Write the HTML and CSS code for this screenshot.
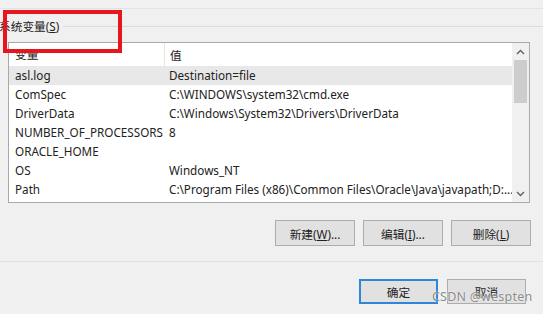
FILE: index.html
```html
<!DOCTYPE html>
<html lang="zh-CN">
<head>
	<meta charset="UTF-8">
	<title>环境变量</title>
	<link rel="stylesheet" href="styles.css">
</head>
<body>
	<div class="top-strip"></div>

	<div class="group-head">
		<span class="group-title">系统变量(<u>S</u>)</span>
		<span class="group-line"></span>
	</div>

	<div class="listbox">
		<div class="list-main">
			<div class="list-header">
				<div class="col-name">变量</div>
				<div class="col-value">值</div>
			</div>
			<div class="row selected"><div class="col-name">asl.log</div><div class="col-value">Destination=file</div></div>
			<div class="row"><div class="col-name">ComSpec</div><div class="col-value">C:\WINDOWS\system32\cmd.exe</div></div>
			<div class="row"><div class="col-name">DriverData</div><div class="col-value">C:\Windows\System32\Drivers\DriverData</div></div>
			<div class="row"><div class="col-name">NUMBER_OF_PROCESSORS</div><div class="col-value">8</div></div>
			<div class="row"><div class="col-name">ORACLE_HOME</div><div class="col-value"></div></div>
			<div class="row"><div class="col-name">OS</div><div class="col-value">Windows_NT</div></div>
			<div class="row"><div class="col-name">Path</div><div class="col-value">C:\Program Files (x86)\Common Files\Oracle\Java\javapath;D:...</div></div>
		</div>
		<div class="scrollbar">
			<div class="scroll-btn">
				<svg width="9" height="6" viewBox="0 0 9 6"><polyline points="1,5 4.5,1.5 8,5" fill="none" stroke="#606060" stroke-width="1.4"/></svg>
			</div>
			<div class="scroll-track"><div class="scroll-thumb"></div></div>
			<div class="scroll-btn">
				<svg width="9" height="6" viewBox="0 0 9 6"><polyline points="1,1 4.5,4.5 8,1" fill="none" stroke="#606060" stroke-width="1.4"/></svg>
			</div>
		</div>
	</div>

	<div class="actions">
		<button class="btn">新建(<u>W</u>)...</button>
		<button class="btn">编辑(<u>I</u>)...</button>
		<button class="btn">删除(<u>L</u>)</button>
	</div>

	<div class="separator"></div>

	<div class="footer">
		<button class="btn btn-small btn-default">确定</button>
		<button class="btn btn-small">取消</button>
	</div>

	<div class="highlight-box"></div>
	<div class="watermark">CSDN @wespten</div>
</body>
</html>
```

FILE: styles.css
```css
body{
	margin: 0;
	width: 543px;
	height: 314px;
	overflow: hidden;
	background: #f0f0f0;
	font-family: "Noto Sans", "Noto Sans CJK SC", sans-serif;
	font-size: 11.7px;
	color: #222;
	position: relative;
}
.top-strip{
	height: 8px;
	border-bottom: 1px solid #e2e2e2;
}
.group-head{
	margin-top: 9px;
	height: 16px;
	display: flex;
	align-items: center;
}
.group-title{
	margin-left: -1px;
	padding-right: 4px;
	line-height: 16px;
}
.group-line{
	flex: 1;
	height: 1px;
	background: #dcdcdc;
}
.listbox{
	margin: 8px 0 0 8px;
	width: 522px;
	height: 161px;
	box-sizing: border-box;
	border: 1px solid #a9a9a9;
	background: #fff;
	display: flex;
}
.list-main{
	flex: 1;
	overflow: hidden;
}
.list-header{
	display: flex;
	height: 23px;
	align-items: center;
}
.list-header .col-name{
	border-right: 1px solid #e5e5e5;
	height: 23px;
	line-height: 23px;
}
.row{
	display: flex;
	height: 19px;
	line-height: 19px;
	white-space: nowrap;
}
.row.selected{
	background: #e8e8e8;
}
.col-name{
	width: 149px;
	padding-left: 6px;
	flex-shrink: 0;
}
.col-value{
	padding-left: 5px;
}
.scrollbar{
	width: 17px;
	background: #f0f0f0;
	display: flex;
	flex-direction: column;
}
.scroll-btn{
	height: 17px;
	display: flex;
	align-items: center;
	justify-content: center;
}
.scroll-track{
	flex: 1;
	padding: 0 2px;
}
.scroll-thumb{
	height: 43px;
	background: #cdcdcd;
}
.actions{
	margin-top: 17px;
	display: flex;
	justify-content: flex-end;
	gap: 8px;
	padding-right: 12px;
}
.btn{
	width: 80px;
	height: 26px;
	background: #e1e1e1;
	border: 1px solid #adadad;
	font-family: inherit;
	font-size: 11.7px;
	color: #222;
	padding: 0;
}
.separator{
	margin-top: 15px;
	height: 1px;
	background: #e0e0e0;
}
.footer{
	margin-top: 17px;
	display: flex;
	justify-content: flex-end;
	gap: 9px;
	padding-right: 17px;
}
.btn-small{
	width: 79px;
	height: 25px;
}
.btn-default{
	border: 2px solid #2e86d8;
}
.highlight-box{
	position: absolute;
	left: 3px;
	top: 10px;
	width: 119px;
	height: 43px;
	box-sizing: border-box;
	border: 4px solid #e5161e;
}
.watermark{
	position: absolute;
	left: 432px;
	top: 288px;
	font-size: 12.5px;
	color: #8c8c8c;
	text-shadow: 0 0 2px #fff;
	letter-spacing: 0.2px;
}
```
